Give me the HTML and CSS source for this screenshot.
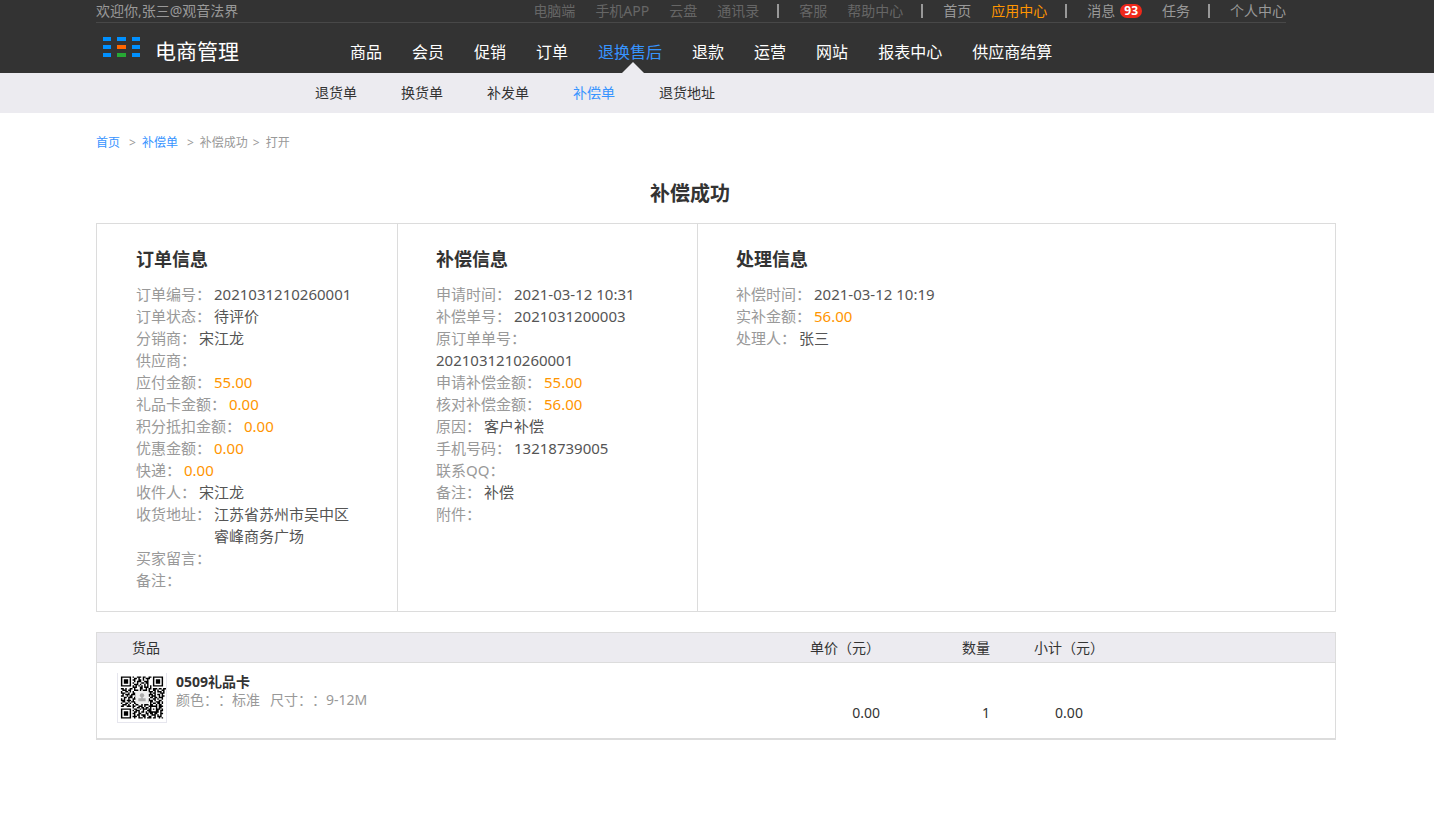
FILE: index.html
```html
<!DOCTYPE html>
<html lang="zh-CN">
<head>
    <meta charset="UTF-8">
    <meta name="viewport" content="width=device-width, initial-scale=1.0">
    <title>电商管理 - 补偿成功</title>
    <link rel="stylesheet" href="styles.css">
</head>
<body>
    <header class="header">
        <div class="topbar">
            <span class="welcome">欢迎你,张三@观音法界</span>
            <nav class="toplinks">
                <a href="#" class="dim">电脑端</a>
                <a href="#" class="dim">手机APP</a>
                <a href="#" class="dim">云盘</a>
                <a href="#" class="dim">通讯录</a>
                <i class="bar"></i>
                <a href="#" class="dim">客服</a>
                <a href="#" class="dim">帮助中心</a>
                <i class="bar"></i>
                <a href="#">首页</a>
                <a href="#" class="hot">应用中心</a>
                <i class="bar"></i>
                <a href="#" class="message">消息<b class="badge">93</b></a>
                <a href="#">任务</a>
                <i class="bar"></i>
                <a href="#">个人中心</a>
            </nav>
        </div>
        <div class="mainbar">
            <a href="#" class="logo">
                <svg width="38" height="21" viewBox="0 0 38 21" aria-hidden="true">
                    <g fill="#0090ff">
                        <rect x="0" y="0" width="8" height="4"/>
                        <rect x="14" y="0" width="9" height="4"/>
                        <rect x="29" y="0" width="8" height="4"/>
                        <rect x="0" y="8" width="8" height="4"/>
                        <rect x="29" y="8" width="8" height="4"/>
                        <rect x="0" y="16" width="8" height="4"/>
                        <rect x="29" y="16" width="8" height="4"/>
                    </g>
                    <rect x="14" y="8" width="9" height="4" fill="#ff6600"/>
                    <rect x="14" y="16" width="9" height="4" fill="#27a834"/>
                </svg>
                <span>电商管理</span>
            </a>
            <nav class="menu">
                <a href="#">商品</a>
                <a href="#">会员</a>
                <a href="#">促销</a>
                <a href="#">订单</a>
                <a href="#" class="active">退换售后</a>
                <a href="#">退款</a>
                <a href="#">运营</a>
                <a href="#">网站</a>
                <a href="#">报表中心</a>
                <a href="#">供应商结算</a>
            </nav>
        </div>
    </header>
    <nav class="submenu">
        <a href="#">退货单</a>
        <a href="#">换货单</a>
        <a href="#">补发单</a>
        <a href="#" class="active">补偿单</a>
        <a href="#">退货地址</a>
    </nav>

    <main class="main">
        <div class="crumbs">
            <a href="#">首页</a><span class="sep wide">&gt;</span><a href="#">补偿单</a><span class="sep wide">&gt;</span><span>补偿成功</span><span class="sep">&gt;</span><span>打开</span>
        </div>
        <h1 class="title">补偿成功</h1>

        <div class="panels">
            <section class="panel">
                <h2>订单信息</h2>
                <dl>
                    <div class="row"><dt>订单编号：</dt><dd>2021031210260001</dd></div>
                    <div class="row"><dt>订单状态：</dt><dd>待评价</dd></div>
                    <div class="row"><dt>分销商：</dt><dd>宋江龙</dd></div>
                    <div class="row"><dt>供应商：</dt><dd></dd></div>
                    <div class="row"><dt>应付金额：</dt><dd class="money">55.00</dd></div>
                    <div class="row"><dt>礼品卡金额：</dt><dd class="money">0.00</dd></div>
                    <div class="row"><dt>积分抵扣金额：</dt><dd class="money">0.00</dd></div>
                    <div class="row"><dt>优惠金额：</dt><dd class="money">0.00</dd></div>
                    <div class="row"><dt>快递：</dt><dd class="money">0.00</dd></div>
                    <div class="row"><dt>收件人：</dt><dd>宋江龙</dd></div>
                    <div class="row address"><dt>收货地址：</dt><dd>江苏省苏州市吴中区睿峰商务广场</dd></div>
                    <div class="row"><dt>买家留言：</dt><dd></dd></div>
                    <div class="row"><dt>备注：</dt><dd></dd></div>
                </dl>
            </section>
            <section class="panel">
                <h2>补偿信息</h2>
                <dl>
                    <div class="row"><dt>申请时间：</dt><dd>2021-03-12 10:31</dd></div>
                    <div class="row"><dt>补偿单号：</dt><dd>2021031200003</dd></div>
                    <div class="row"><dt>原订单单号：</dt><dd>2021031210260001</dd></div>
                    <div class="row"><dt>申请补偿金额：</dt><dd class="money">55.00</dd></div>
                    <div class="row"><dt>核对补偿金额：</dt><dd class="money">56.00</dd></div>
                    <div class="row"><dt>原因：</dt><dd>客户补偿</dd></div>
                    <div class="row"><dt>手机号码：</dt><dd>13218739005</dd></div>
                    <div class="row"><dt>联系QQ：</dt><dd></dd></div>
                    <div class="row"><dt>备注：</dt><dd>补偿</dd></div>
                    <div class="row"><dt>附件：</dt><dd></dd></div>
                </dl>
            </section>
            <section class="panel">
                <h2>处理信息</h2>
                <dl>
                    <div class="row"><dt>补偿时间：</dt><dd>2021-03-12 10:19</dd></div>
                    <div class="row"><dt>实补金额：</dt><dd class="money">56.00</dd></div>
                    <div class="row"><dt>处理人：</dt><dd>张三</dd></div>
                </dl>
            </section>
        </div>

        <table class="goods">
            <colgroup>
                <col>
                <col class="c-price">
                <col class="c-num">
                <col class="c-total">
                <col class="c-rest">
            </colgroup>
            <thead>
                <tr>
                    <th class="name">货品</th>
                    <th class="right">单价（元）</th>
                    <th class="right">数量</th>
                    <th class="center">小计（元）</th>
                    <th></th>
                </tr>
            </thead>
            <tbody>
                <tr>
                    <td>
                        <div class="product">
                            <svg class="qr" viewBox="-2 -2 33 33" role="img" aria-label="二维码">
                                <path fill="none" stroke="#000" stroke-width="1" d="M0 .5h7m1 0h1m2 0h3m1 0h2m2 0h2m1 0h7M0 1.5h1m5 0h1m2 0h2m1 0h1m2 0h1m1 0h3m2 0h1m5 0h1M0 2.5h1m1 0h3m1 0h1m1 0h2m2 0h2m1 0h1m2 0h1m3 0h1m1 0h3m1 0h1M0 3.5h1m1 0h3m1 0h1m2 0h1m1 0h3m2 0h3m3 0h1m1 0h3m1 0h1M0 4.5h1m1 0h3m1 0h1m1 0h1m2 0h1m2 0h2m1 0h2m3 0h1m1 0h3m1 0h1M0 5.5h1m5 0h1m2 0h3m1 0h1m2 0h1m1 0h1m3 0h1m5 0h1M0 6.5h7m1 0h1m1 0h1m1 0h1m1 0h1m1 0h1m1 0h1m1 0h1m1 0h7M8 7.5h3m2 0h2m1 0h3m1 0h1
                                M0 8.5h2m1 0h1m2 0h2m1 0h1m3 0h2m2 0h1m1 0h2m1 0h3m1 0h2m1 0h2M1 9.5h3m1 0h2m2 0h3m1 0h1m1 0h3m1 0h1m2 0h2m1 0h1m2 0h2M0 10.5h1m2 0h2m1 0h1m1 0h1m2 0h2m3 0h2m1 0h3m1 0h1m1 0h3m1 0h1M0 11.5h3m2 0h1m2 0h2m7 0h1m2 0h1m1 0h2m3 0h3M1 12.5h1m1 0h3m1 0h3m9 0h3m1 0h1m1 0h2m1 0h1M0 13.5h2m2 0h1m1 0h2m2 0h1m8 0h1m1 0h3m2 0h1m1 0h2M2 14.5h2m1 0h3m1 0h1m10 0h2m1 0h2m1 0h3M0 15.5h1m1 0h1m2 0h1m2 0h3m8 0h1m2 0h2m1 0h1m2 0h1M0 16.5h3m1 0h3m1 0h1m10 0h3m1 0h1m2 0h2M1 17.5h2m2 0h1m1 0h3m2 0h1m5 0h1m1 0h2m2 0h3m1 0h1
                                M0 18.5h1m2 0h2m1 0h1m2 0h2m1 0h2m1 0h3m2 0h1m1 0h2m1 0h2m1 0h1M1 19.5h3m1 0h1m2 0h1m1 0h2m2 0h1m1 0h3m1 0h2m2 0h1m1 0h2M0 20.5h2m2 0h3m1 0h2m2 0h3m1 0h1m2 0h6m1 0h3M8 21.5h1m2 0h2m1 0h2m1 0h2m1 0h1m3 0h1m1 0h2M0 22.5h7m2 0h2m2 0h1m1 0h3m1 0h2m1 0h1m1 0h3m1 0h1M0 23.5h1m5 0h1m1 0h1m1 0h3m2 0h1m2 0h3m3 0h2m1 0h2M0 24.5h1m1 0h3m1 0h1m2 0h2m1 0h1m1 0h2m1 0h1m1 0h7m1 0h1M0 25.5h1m1 0h3m1 0h1m1 0h2m2 0h2m3 0h2m1 0h2m1 0h2m2 0h2M0 26.5h1m1 0h3m1 0h1m2 0h1m1 0h2m1 0h3m1 0h1m2 0h3m1 0h1m1 0h1M0 27.5h1m5 0h1m1 0h3m1 0h1m2 0h2m2 0h2m2 0h1m1 0h3M0 28.5h7m2 0h1m2 0h3m1 0h1m1 0h3m1 0h2m2 0h1m1 0h1"/>
                                <rect x="10" y="10" width="9" height="9" rx="1" fill="#eee"/>
                                <circle cx="14.500" cy="13" r="1.500" fill="#aaa"/>
                                <path d="M14 14h1v1h2v2h-5v-2h2z" fill="#aaa"/>
                            </svg>
                            <div>
                                <div class="product-name">0509礼品卡</div>
                                <div class="product-spec"><span>颜色：：标准</span><span>尺寸：：9-12M</span></div>
                            </div>
                        </div>
                    </td>
                    <td class="right value">0.00</td>
                    <td class="right value">1</td>
                    <td class="center value">0.00</td>
                    <td></td>
                </tr>
            </tbody>
        </table>
    </main>
</body>
</html>
```
FILE: styles.css
```css
:root {
    --dark: #333;
    --blue: #3794ff;
    --orange: #ff9500;
    --light: #ecebf0;
    --line: #dcdcdc;
}
* {
    box-sizing: border-box;
}
body {
    margin: 0;
    background: #fff;
    color: var(--dark);
    font-family: "Noto Sans", "Noto Sans CJK SC", sans-serif;
    font-size: 14px;
    line-height: 20px;
    text-spacing-trim: space-all;
}
a {
    color: inherit;
    text-decoration: none;
    white-space: nowrap;
}
h1, h2, dl, dd {
    margin: 0;
}

/* header */
.header {
    background: var(--dark);
    padding: 0 148px 0 96px;
}
.topbar {
    display: flex;
    justify-content: space-between;
    height: 23px;
    line-height: 22px;
    border-bottom: 1px solid #484848;
    color: #999;
}
.toplinks {
    display: flex;
    align-items: center;
    gap: 20px;
}
.dim { color: #666; }
.hot { color: var(--orange); }
.bar {
    width: 2px;
    height: 14px;
    margin-left: -2px;
    background: #999;
}
.message {
    display: flex;
    align-items: center;
    gap: 5px;
}
.badge {
    padding: 0 4px;
    border-radius: 7px;
    background: #f0281a;
    color: #fff;
    font-size: 12px;
    line-height: 14px;
}
.mainbar {
    display: flex;
    height: 50px;
}
.logo {
    display: flex;
    align-items: flex-start;
    gap: 14px;
    width: 254px;
    padding: 14px 0 0 7px;
    color: #fff;
    font-size: 21px;
    line-height: 28px;
}
.menu {
    display: flex;
    gap: 30px;
    padding-top: 8px;
    color: #fff;
    font-size: 16px;
    line-height: 42px;
}
.menu .active {
    position: relative;
    color: var(--blue);
}
.menu .active::after {
    content: "";
    position: absolute;
    left: 24px;
    bottom: 0;
    border: 11px solid transparent;
    border-top: 0;
    border-bottom-color: var(--light);
}
.submenu {
    display: flex;
    gap: 44px;
    padding-left: 315px;
    background: var(--light);
    line-height: 40px;
}
.submenu .active {
    color: var(--blue);
}

/* content */
.main {
    padding: 20px 98px 20px 96px;
}
.crumbs {
    color: #999;
    font-size: 12px;
}
.crumbs a {
    color: var(--blue);
}
.sep {
    margin: 0 6px 0 5px;
}
.sep.wide {
    margin-left: 9px;
}
.title {
    padding: 21px 52px 9px 0;
    font-size: 20px;
    line-height: 40px;
    text-align: center;
}
.panels {
    display: flex;
    border: 1px solid var(--line);
}
.panel {
    width: 300px;
    padding: 20px 40px 20px 39px;
    font-size: 15px;
    line-height: 22px;
}
.panel + .panel {
    padding-left: 38px;
    border-left: 1px solid var(--line);
}
.panel:last-child {
    flex: 1;
}
.panel h2 {
    margin-bottom: 9px;
    font-size: 18px;
    line-height: 30px;
}
.row {
    display: flex;
    flex-wrap: wrap;
    column-gap: 3px;
}
.row dt {
    color: #999;
    white-space: nowrap;
}
.row dd {
    color: #555;
}
.row .money {
    color: var(--orange);
}
.address {
    flex-wrap: nowrap;
}

/* goods table */
.goods {
    width: 100%;
    margin-top: 20px;
    table-layout: fixed;
    border-collapse: separate;
    border-spacing: 0;
    border: 1px solid var(--line);
    border-bottom-width: 2px;
}
.goods th {
    height: 30px;
    padding: 0;
    background: var(--light);
    border-bottom: 1px solid var(--line);
    font-weight: normal;
    text-align: left;
    white-space: nowrap;
}
.goods td {
    padding: 10px 0 15px;
    vertical-align: top;
}
.c-price { width: 120px; }
.c-num { width: 110px; }
.c-total { width: 158px; }
.c-rest { width: 187px; }
.goods .name { padding-left: 35px; }
.goods .right { text-align: right; }
.goods .center { text-align: center; }
.goods .value { vertical-align: bottom; }
.product {
    display: flex;
    gap: 9px;
    padding-left: 20px;
}
.qr {
    width: 50px;
    height: 50px;
    border: 1px solid #e6e6ee;
    border-top: 0;
}
.product-name {
    font-weight: bold;
    line-height: 17px;
}
.product-spec {
    display: flex;
    gap: 10px;
    color: #999;
}
```
